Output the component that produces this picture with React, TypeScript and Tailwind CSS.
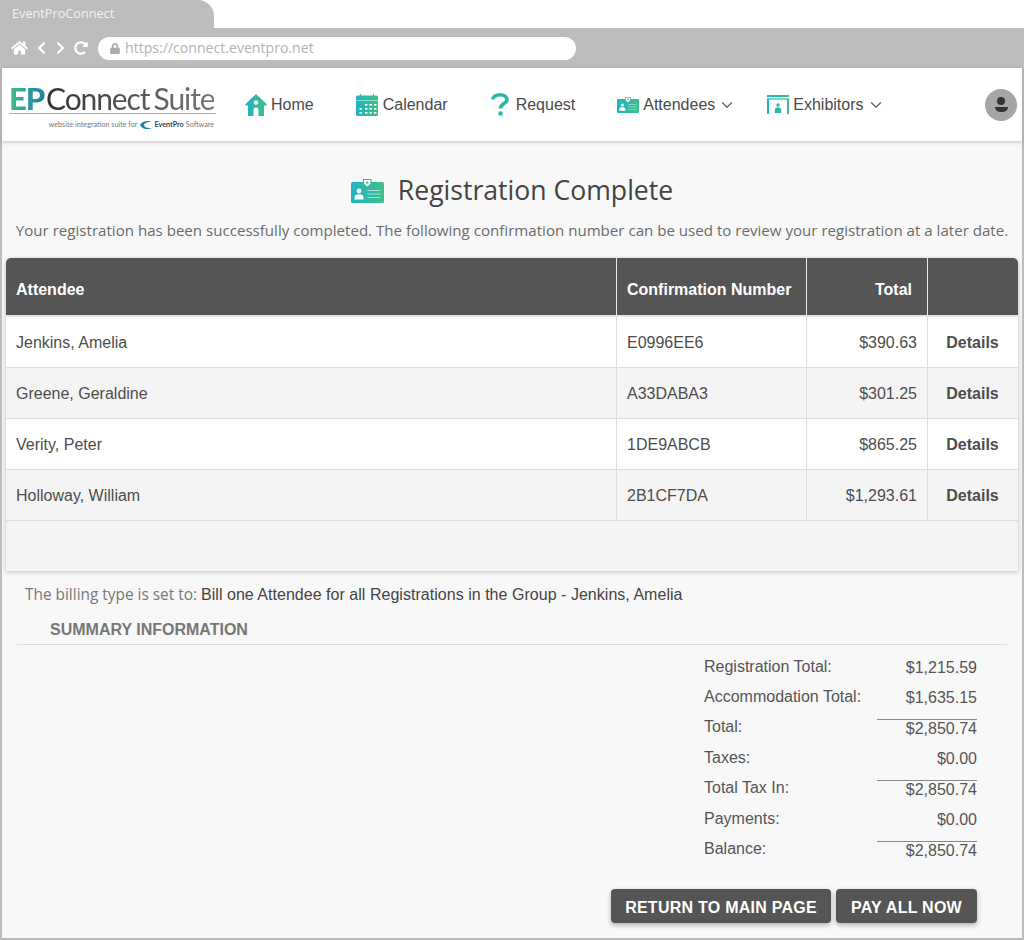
import { ChevronDown } from 'lucide-react';
import { FaChevronLeft, FaChevronRight, FaHome, FaLock, FaRedoAlt } from 'react-icons/fa';

const attendees = [
  { name: 'Jenkins, Amelia', code: 'E0996EE6', total: '$390.63' },
  { name: 'Greene, Geraldine', code: 'A33DABA3', total: '$301.25' },
  { name: 'Verity, Peter', code: '1DE9ABCB', total: '$865.25' },
  { name: 'Holloway, William', code: '2B1CF7DA', total: '$1,293.61' },
];

const summary = [
  { label: 'Registration Total:', value: '$1,215.59' },
  { label: 'Accommodation Total:', value: '$1,635.15' },
  { label: 'Total:', value: '$2,850.74', ruled: true },
  { label: 'Taxes:', value: '$0.00' },
  { label: 'Total Tax In:', value: '$2,850.74', ruled: true },
  { label: 'Payments:', value: '$0.00' },
  { label: 'Balance:', value: '$2,850.74', ruled: true },
];

function Gradient({ id }: { id: string }) {
  return (
    <defs>
      <linearGradient id={id} x1="0" y1="0" x2="1" y2="0">
        <stop offset="0" stopColor="#1fb5c0" />
        <stop offset="1" stopColor="#3fbd8c" />
      </linearGradient>
    </defs>
  );
}

function HomeIcon() {
  return (
    <svg width="22" height="22" viewBox="0 0 22 22">
      <Gradient id="home-g" />
      <path
        fill="url(#home-g)"
        d="M11 0 L22 10.5 L20.5 12 L19 10.8 L19 22 L13.5 22 L13.5 16 A2.5 2.5 0 0 0 8.5 16 L8.5 22 L3 22 L3 10.8 L1.5 12 L0 10.5 Z"
      />
      <circle cx="11" cy="8.5" r="2.2" fill="#fff" />
    </svg>
  );
}

function CalendarIcon() {
  const cells = [
    [9, 10], [13.5, 10], [18, 10],
    [3.5, 14], [9, 14], [13.5, 14], [18, 14],
    [3.5, 18], [9, 18], [13.5, 18], [18, 18],
  ];
  return (
    <svg width="22" height="22" viewBox="0 0 22 22">
      <Gradient id="cal-g" />
      <rect y="1.5" width="22" height="20.5" rx="1.5" fill="url(#cal-g)" />
      <rect x="4" width="1" height="3" fill="#3fbd8c" />
      <rect x="17" width="1" height="3" fill="#3fbd8c" />
      <rect y="6" width="22" height="0.8" fill="#fff" opacity="0.6" />
      {cells.map(([x, y], i) => (
        <rect key={i} x={x} y={y} width="2.4" height="1.6" fill="#fff" />
      ))}
    </svg>
  );
}

function QuestionIcon() {
  return (
    <svg width="18" height="23" viewBox="0 0 18 23">
      <path
        fill="none"
        stroke="#27b8a8"
        strokeWidth="3.6"
        d="M2 6.5 C2 3.5 5 1.8 9 1.8 C13 1.8 16 3.7 16 6.8 C16 10.8 9.5 10.5 9.5 15.5"
      />
      <rect x="7.5" y="18.5" width="4" height="4" rx="0.5" fill="#27b8a8" />
    </svg>
  );
}

function BadgeIcon({ id, w, h }: { id: string; w: number; h: number }) {
  return (
    <svg width={w} height={h} viewBox="0 0 33 24">
      <Gradient id={id} />
      <rect y="3" width="33" height="21" rx="1.5" fill={`url(#${id})`} />
      <path d="M12.5 0.5 H20 V5 L16.2 8.5 L12.5 5 Z" fill="#fff" stroke="#35bb98" strokeWidth="1.2" />
      <circle cx="16.2" cy="3.6" r="1.2" fill="#35bb98" />
      <circle cx="8" cy="12" r="2.4" fill="#fff" />
      <path d="M3.5 20.5 V18 C3.5 16 5.5 15.2 8 15.2 C10.5 15.2 12.5 16 12.5 18 V20.5 Z" fill="#fff" />
      <rect x="16.5" y="11" width="13" height="1" fill="#fff" opacity="0.55" />
      <rect x="16.5" y="14.5" width="13" height="1" fill="#fff" opacity="0.55" />
      <rect x="16.5" y="18" width="13" height="1" fill="#fff" opacity="0.55" />
    </svg>
  );
}

function ExhibitorIcon() {
  return (
    <svg width="22" height="19" viewBox="0 0 22 19">
      <Gradient id="exh-g" />
      <rect width="22" height="2.2" fill="url(#exh-g)" />
      <rect y="3.4" width="22" height="1.2" fill="url(#exh-g)" />
      <rect y="4" width="2" height="15" fill="#1fb5c0" />
      <rect x="20" y="4" width="2" height="15" fill="#3fbd8c" />
      <circle cx="11" cy="10" r="1.7" fill="#27b8a8" />
      <path d="M7.8 18 V14.5 C7.8 13 9.3 12.4 11 12.4 C12.7 12.4 14.2 13 14.2 14.5 V18 Z" fill="#27b8a8" />
    </svg>
  );
}

function Logo() {
  return (
    <div className="mt-[4px] w-[207px] font-['Lato',sans-serif]">
      <div className="flex h-[30px] items-center whitespace-nowrap text-[30px] leading-[30px] tracking-[-1.1px] [word-spacing:-2.5px]">
        <span className="bg-linear-to-r from-[#3fbd8c] to-[#1f7fa8] bg-clip-text pr-[2px] text-[31px] font-black text-transparent">EP</span>
        <span className="bg-linear-to-r from-[#333333] to-[#777777] bg-clip-text text-transparent">Connect Suite</span>
      </div>
      <div className="h-px bg-[#a9a9a9]" />
      <div className="mt-[5px] flex items-center justify-end gap-[2px] whitespace-nowrap pr-[2px] text-[7.2px] leading-[12px] text-[#777]">
        <span>website integration suite for</span>
        <svg width="13" height="10" viewBox="0 0 13 10">
          <path d="M1 5 C3 0.5 10 0 12.5 2 C8 1.5 5 3 5 5 C5 7 8 8.5 12.5 8 C10 10 3 9.5 1 5 Z" fill="#1f7fa8" />
        </svg>
        <span className="font-bold text-[#2d4a63]">EventPro</span>
        <span>Software</span>
      </div>
    </div>
  );
}

function NavItem({
  icon,
  label,
  gap,
  left,
  chevron,
}: {
  icon: React.ReactNode;
  label: string;
  gap: string;
  left: string;
  chevron?: boolean;
}) {
  return (
    <a className={`flex items-center ${gap} ${left}`}>
      {icon}
      <span className="text-[16px] text-[#4a4a4a]">{label}</span>
      {chevron && <ChevronDown className="-ml-[1px] h-[18px] w-[18px] text-[#666]" strokeWidth={1.75} />}
    </a>
  );
}

function AttendeeTable() {
  const cols = 'grid grid-cols-[610px_190px_121px_92px]';
  return (
    <div className="mx-[4px] overflow-hidden rounded-t-[5px] text-[16px] text-[#4d4d4d] shadow-[0_1px_4px_rgba(0,0,0,0.25)]">
      <div className={`${cols} h-[59px] border-b-2 border-[#e4e4e4] bg-[#555] font-bold text-white`}>
        <div className="flex items-center px-[10px] pt-[7px]">Attendee</div>
        <div className="flex items-center border-l border-[#e8e8e8] px-[10px] pt-[7px]">Confirmation Number</div>
        <div className="flex items-center justify-end border-l border-[#e8e8e8] px-[15px] pt-[7px]">Total</div>
        <div className="border-l border-[#e8e8e8]" />
      </div>
      {attendees.map((row, i) => (
        <div
          key={row.code}
          className={`${cols} h-[51px] border-b border-[#dedede] ${i % 2 === 0 ? 'bg-white' : 'bg-[#f4f4f4]'}`}
        >
          <div className="flex items-center px-[10px] pt-[1px]">{row.name}</div>
          <div className="flex items-center border-l border-[#dedede] px-[10px] pt-[1px]">{row.code}</div>
          <div className="flex items-center justify-end border-l border-[#dedede] px-[10px] pt-[1px]">{row.total}</div>
          <div className="flex items-center justify-center border-l border-[#dedede] pt-[1px] pr-[2px] font-bold">Details</div>
        </div>
      ))}
      <div className="h-[50px] bg-[#f4f4f4]" />
    </div>
  );
}

export default function App() {
  return (
    <div className="h-[940px] w-[1024px] overflow-hidden bg-white font-['Liberation_Sans',sans-serif]">
      {/* browser chrome */}
      <div className="h-[28px]">
        <div className="flex h-full w-[214px] items-center rounded-tr-[16px] bg-[#bdbdbd] pl-[12px] font-['Open_Sans',sans-serif] text-[12.7px] text-[#f2f2f2]">
          EventProConnect
        </div>
      </div>
      <div className="flex h-[40px] items-center bg-[#bdbdbd] pl-[11px] text-white">
        <FaHome className="h-[16px] w-[17px]" />
        <FaChevronLeft className="ml-[8px] h-[14px] w-[11px]" />
        <FaChevronRight className="ml-[8px] h-[14px] w-[11px]" />
        <FaRedoAlt className="ml-[8px] h-[14px] w-[14px]" />
        <div className="ml-[10px] flex h-[23px] w-[478px] items-center rounded-full bg-white pl-[12px] font-['Open_Sans',sans-serif] text-[14.1px] text-[#b3b3b3]">
          <FaLock className="mr-[5px] h-[11px] w-[10px] text-[#aaa]" />
          https://connect.eventpro.net
        </div>
      </div>

      <div className="flex h-[872px] flex-col border-x-2 border-b-2 border-[#bdbdbd] bg-[#f8f8f8]">
        {/* nav */}
        <nav className="relative flex h-[73px] items-center bg-white pl-[7px] shadow-[0_1px_4px_rgba(0,0,0,0.22)]">
          <Logo />
          <NavItem icon={<HomeIcon />} label="Home" gap="gap-[4px]" left="ml-[29px]" />
          <NavItem icon={<CalendarIcon />} label="Calendar" gap="gap-[5px]" left="ml-[42px]" />
          <NavItem icon={<QuestionIcon />} label="Request" gap="gap-[7px]" left="ml-[43px]" />
          <NavItem
            icon={<BadgeIcon id="nav-badge-g" w={22} h={16} />}
            label="Attendees"
            gap="gap-[4px]"
            left="ml-[42px]"
            chevron
          />
          <NavItem icon={<ExhibitorIcon />} label="Exhibitors" gap="gap-[4px]" left="ml-[31px]" chevron />
          <div className="ml-auto mr-[5px] flex h-[32px] w-[32px] flex-col items-center justify-center rounded-full bg-[#a6a6a6]">
            <div className="h-[8px] w-[8px] rounded-full bg-[#333]" />
            <div className="mt-[2px] h-[5px] w-[13px] rounded-b-full rounded-t-[3px] bg-[#333]" />
          </div>
        </nav>

        {/* heading */}
        <div className="mt-[33px] flex h-[33px] items-center justify-center gap-[14px] font-['Open_Sans',sans-serif]">
          <BadgeIcon id="title-badge-g" w={33} h={24} />
          <h1 className="text-[26.6px] text-[#444]">Registration Complete</h1>
        </div>
        <p className="mt-[12px] h-[22px] text-center font-['Open_Sans',sans-serif] text-[15.1px] leading-[22px] whitespace-nowrap text-[#6b6b6b]">
          Your registration has been successfully completed. The following confirmation number can be used to review
          your registration at a later date.
        </p>

        <div className="mt-[17px]">
          <AttendeeTable />
        </div>

        <div className="mt-[13px] ml-[23px] h-[22px] text-[16px] leading-[22px] tracking-[0.03px] text-[#444]">
          <span className="font-['Open_Sans',sans-serif] text-[15.4px] tracking-normal text-[#777]">The billing type is set to: </span>
          Bill one Attendee for all Registrations in the Group - Jenkins, Amelia
        </div>

        <div className="mx-[15px] mt-[15px] h-[24px] border-b border-[#dcdcdc] pl-[33px] text-[16px] leading-[18px] font-bold text-[#777]">
          SUMMARY INFORMATION
        </div>

        {/* totals */}
        <div className="mt-[7.8px] ml-[702px] w-[273px] text-[16px] text-[#555]">
          {summary.map((row) => (
            <div key={row.label} className="flex h-[30.35px] justify-between">
              <span className="leading-[28px]">{row.label}</span>
              <span
                className={`h-[29px] w-[100px] whitespace-nowrap text-right ${
                  row.ruled ? 'mt-[6px] border-t border-[#888] leading-[18px]' : 'mt-[1px] leading-[28px]'
                }`}
              >
                {row.value}
              </span>
            </div>
          ))}
        </div>

        <div className="mt-[24px] ml-[609px] flex gap-[5px] text-[16px] font-bold tracking-[0.25px] text-white">
          <button className="h-[34px] w-[220px] rounded-[4px] bg-[#555] pt-[3px] shadow-[0_2px_5px_rgba(0,0,0,0.3)]">
            RETURN TO MAIN PAGE
          </button>
          <button className="h-[34px] w-[141px] rounded-[4px] bg-[#555] pt-[3px] shadow-[0_2px_5px_rgba(0,0,0,0.3)]">
            PAY ALL NOW
          </button>
        </div>
      </div>
    </div>
  );
}
